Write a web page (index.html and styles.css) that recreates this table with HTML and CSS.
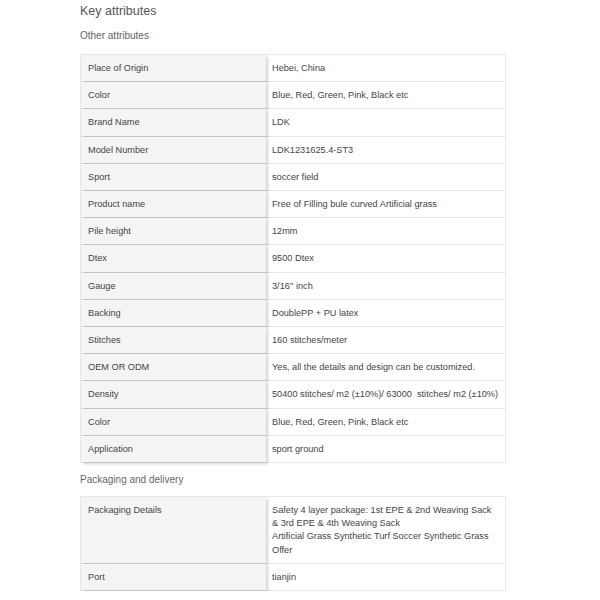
FILE: index.html
```html
<!DOCTYPE html>
<html>
<head>
<meta charset="utf-8">
<link rel="stylesheet" href="styles.css">
</head>
<body>
<div class="page">
  <h2 class="title">Key attributes</h2>
  <h3 class="sub">Other attributes</h3>
  <div class="table">
    <div class="row"><div class="k">Place of Origin</div><div class="v">Hebei, China</div></div>
    <div class="row"><div class="k">Color</div><div class="v">Blue, Red, Green, Pink, Black etc</div></div>
    <div class="row"><div class="k">Brand Name</div><div class="v">LDK</div></div>
    <div class="row"><div class="k">Model Number</div><div class="v">LDK1231625.4-ST3</div></div>
    <div class="row"><div class="k">Sport</div><div class="v">soccer field</div></div>
    <div class="row"><div class="k">Product name</div><div class="v">Free of Filling bule curved Artificial grass</div></div>
    <div class="row"><div class="k">Pile height</div><div class="v">12mm</div></div>
    <div class="row"><div class="k">Dtex</div><div class="v">9500 Dtex</div></div>
    <div class="row"><div class="k">Gauge</div><div class="v">3/16'' inch</div></div>
    <div class="row"><div class="k">Backing</div><div class="v">DoublePP + PU latex</div></div>
    <div class="row"><div class="k">Stitches</div><div class="v">160 stitches/meter</div></div>
    <div class="row"><div class="k">OEM OR ODM</div><div class="v">Yes, all the details and design can be customized.</div></div>
    <div class="row"><div class="k">Density</div><div class="v nowrap">50400 stitches/ m2 (±10%)/ 63000&nbsp; stitches/ m2 (±10%)</div></div>
    <div class="row"><div class="k">Color</div><div class="v">Blue, Red, Green, Pink, Black etc</div></div>
    <div class="row"><div class="k">Application</div><div class="v">sport ground</div></div>
  </div>
  <h3 class="sub sub2">Packaging and delivery</h3>
  <div class="table table2">
    <div class="row"><div class="k">Packaging Details</div><div class="v">Safety 4 layer package: 1st EPE &amp; 2nd Weaving Sack &amp; 3rd EPE &amp; 4th Weaving Sack<br>Artificial Grass Synthetic Turf Soccer Synthetic Grass Offer</div></div>
    <div class="row"><div class="k">Port</div><div class="v">tianjin</div></div>
  </div>
</div>
</body>
</html>
```

FILE: styles.css
```css
html, body {
  margin: 0;
  padding: 0;
  background: #fff;
}
body {
  font-family: "Liberation Sans", Arial, sans-serif;
  color: #555;
}
.page {
  padding: 3px 94px 0 80px;
}
.title {
  margin: 0;
  font-size: 12.5px;
  font-weight: normal;
  color: #555;
  line-height: 16px;
}
.sub {
  margin: 10px 0 0;
  font-size: 10px;
  font-weight: normal;
  color: #666;
  line-height: 14px;
}
.sub2 {
  margin-top: 10px;
}
.table {
  margin-top: 11px;
  border: 1px solid #e8e8e8;
  width: 426px;
  box-sizing: border-box;
}
.table2 {
  margin-top: 9px;
}
.row {
  display: flex;
  border-top: 1px solid #e6e6e6;
}
.row:first-child {
  border-top: none;
}
.k {
  width: 185px;
  flex: none;
  background: #f4f4f4;
  box-shadow: 2px 2px 3px rgba(0,0,0,0.18);
  padding: 7px 6px 6px 7px;
  box-sizing: border-box;
  font-size: 9.2px;
  line-height: 13.2px;
  color: #444;
  position: relative;
  z-index: 1;
}
.v {
  flex: 1;
  padding: 7px 12px 6px 6px;
  font-size: 9.2px;
  line-height: 13.2px;
  color: #444;
}
.nowrap {
  white-space: nowrap;
}
```
